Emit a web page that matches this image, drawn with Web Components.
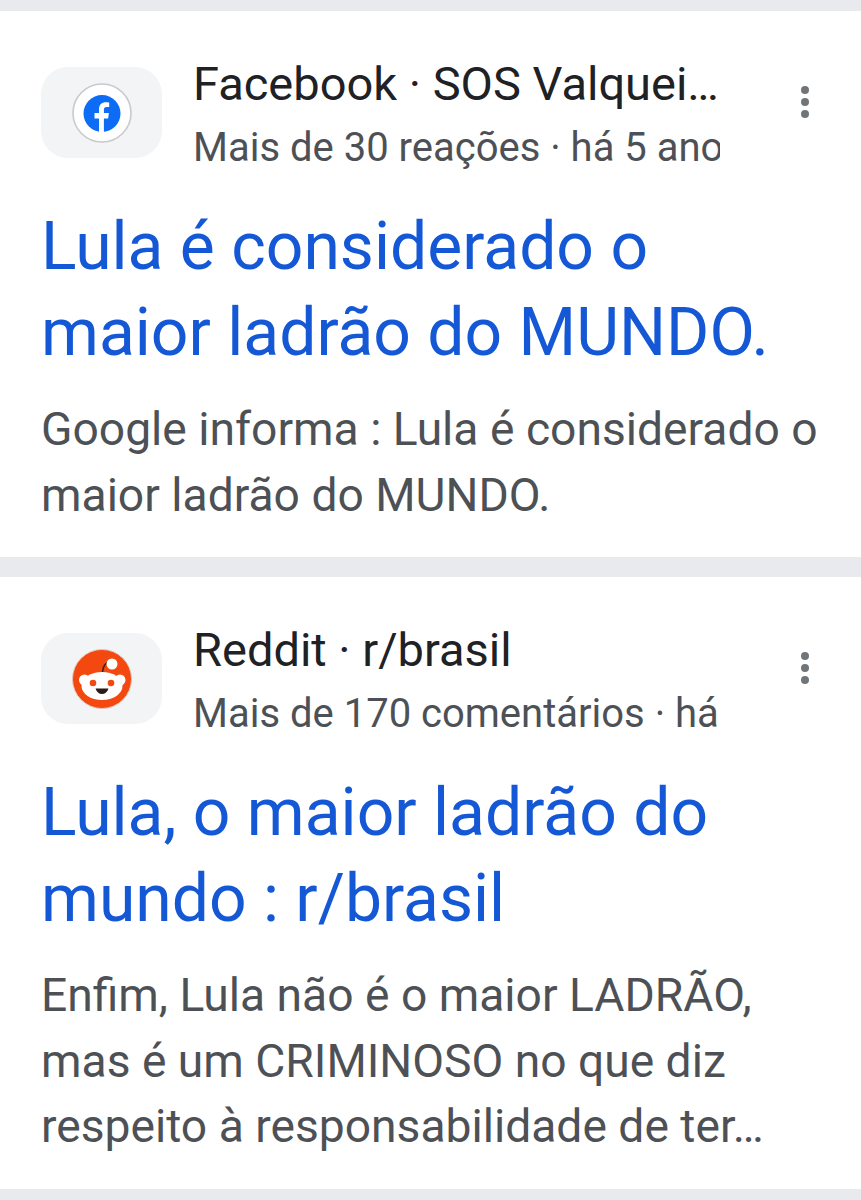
<!DOCTYPE html>
<html lang="pt">
<head>
<meta charset="utf-8">
<title>Resultados</title>
<style>
  html, body { margin: 0; background: #e8eaed; }
  body { padding: 11px 0 12px; font-family: Roboto, "Liberation Sans", sans-serif; }
  result-card + result-card { margin-top: 20px; }
</style>
</head>
<body>
<result-card source="Facebook · SOS Valquei…" meta="Mais de 30 reações · há 5 anos">
  <svg slot="icon" viewBox="0 0 60 60" width="60" height="60">
    <circle cx="30" cy="30" r="29" fill="#fff" stroke="#c8c9cb" stroke-width="1.6"/>
    <circle cx="30" cy="30.500" r="18.500" fill="#0c6cf5"/>
    <path d="M27 49V35.500h-4.500V30H27v-3.800c0-4.600 2.700-7 6.800-7 1.300 0 2.700.2 3.400.3v4.600h-2.400c-2.200 0-2.900 1.300-2.900 2.700V30h5l-.8 5.500h-4.200V49z" fill="#fff"/>
  </svg>
  <span slot="title">Lula é considerado o maior ladrão do MUNDO.</span>
  <span slot="snippet">Google informa : Lula é considerado o maior ladrão do MUNDO.</span>
</result-card>
<result-card source="Reddit · r/brasil" meta="Mais de 170 comentários · há 5 anos">
  <svg slot="icon" viewBox="0 0 60 60" width="60" height="60">
    <circle cx="30" cy="30" r="29.500" fill="#f3480f" stroke="#e3c4b8" stroke-width="1"/>
    <path d="M30.500 23C31 18 33 14 37 13" fill="none" stroke="#4a2118" stroke-width="1.600"/>
    <circle cx="40" cy="15" r="5.500" fill="#fff"/>
    <circle cx="12.500" cy="31" r="5.500" fill="#fff"/>
    <circle cx="48" cy="31" r="5.500" fill="#fff"/>
    <ellipse cx="30" cy="37" rx="20.500" ry="14" fill="#fff"/>
    <circle cx="21" cy="34" r="3.300" fill="#f3480f"/>
    <circle cx="39" cy="34" r="3.300" fill="#f3480f"/>
    <path d="M23.500 39.500h13c-1 3.500-3.500 5.500-6.500 5.500s-5.500-2-6.500-5.500z" fill="#2a1a18"/>
  </svg>
  <span slot="title">Lula, o maior ladrão do mundo : r/brasil</span>
  <span slot="snippet">Enfim, Lula não é o maior LADRÃO, mas é um CRIMINOSO no que diz respeito à responsabilidade de ter…</span>
</result-card>
<script>
const template = document.createElement('template')
template.innerHTML = `
  <style>
    :host {
      display: block;
      background: #fff;
      padding: 42px 41px 29px 41px;
      font-family: Roboto, "Liberation Sans", sans-serif;
    }
    .head {
      display: flex;
      align-items: flex-start;
    }
    .icon {
      flex: none;
      width: 121px;
      height: 91px;
      margin-top: 14px;
      border-radius: 27px;
      background: #f3f4f6;
      display: flex;
      align-items: center;
      justify-content: center;
    }
    ::slotted(svg) {
      filter: blur(0.5px);
    }
    .lines {
      flex: none;
      width: 527px;
      margin-left: 31px;
      overflow: hidden;
      white-space: nowrap;
    }
    .source {
      font-size: 47px;
      line-height: 61px;
      color: #202124;
    }
    .meta {
      margin-top: 2px;
      font-size: 40px;
      line-height: 63px;
      color: #4d5156;
    }
    .more {
      flex: none;
      margin: 33px 0 0 81px;
      display: flex;
      flex-direction: column;
      gap: 4px;
    }
    .more i {
      width: 8px;
      height: 8px;
      border-radius: 50%;
      background: #70757a;
    }
    .title {
      margin-top: 25px;
      font-size: 66px;
      font-weight: 400;
      line-height: 86px;
      color: #1558d6;
    }
    .snippet {
      margin-top: 21px;
      font-size: 46.200px;
      line-height: 65.500px;
      color: #4d5156;
    }
  </style>
  <div class="head">
    <div class="icon"><slot name="icon"></slot></div>
    <div class="lines">
      <div class="source"></div>
      <div class="meta"></div>
    </div>
    <div class="more"><i></i><i></i><i></i></div>
  </div>
  <div class="title"><slot name="title"></slot></div>
  <div class="snippet"><slot name="snippet"></slot></div>
`

class ResultCard extends HTMLElement {
  constructor() {
    super()

    const shadow = this.attachShadow({ mode: 'open' })
    shadow.appendChild(template.content.cloneNode(true))

    shadow.querySelector('.source').textContent = this.getAttribute('source')
    shadow.querySelector('.meta').textContent = this.getAttribute('meta')
  }
}

window.customElements.define('result-card', ResultCard)
</script>
</body>
</html>
